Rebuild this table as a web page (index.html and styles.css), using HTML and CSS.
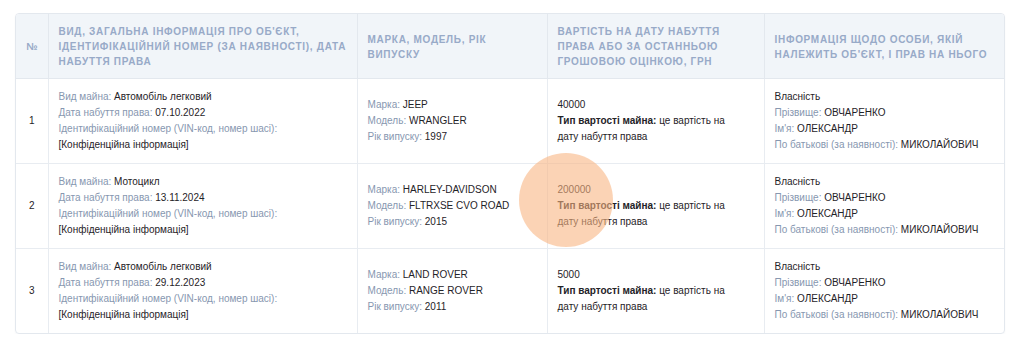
FILE: index.html
```html
<!DOCTYPE html>
<html lang="uk">
<head>
<meta charset="utf-8">
<link rel="stylesheet" href="styles.css">
</head>
<body>
<div class="page">
  <div class="table-wrap">
    <table class="assets">
      <colgroup>
        <col class="c-num"><col class="c-info"><col class="c-brand"><col class="c-cost"><col class="c-owner">
      </colgroup>
      <thead>
        <tr>
          <th class="num">№</th>
          <th>Вид, загальна інформація про об'єкт, ідентифікаційний номер (за наявності), дата набуття права</th>
          <th>Марка, модель, рік випуску</th>
          <th>Вартість на дату набуття права або за останньою грошовою оцінкою, грн</th>
          <th>Інформація щодо особи, якій належить об'єкт, і прав на нього</th>
        </tr>
      </thead>
      <tbody>
        <tr>
          <td class="num">1</td>
          <td>
            <div><span class="lbl">Вид майна:</span> Автомобіль легковий</div>
            <div><span class="lbl">Дата набуття права:</span> 07.10.2022</div>
            <div><span class="lbl">Ідентифікаційний номер (VIN-код, номер шасі):</span></div>
            <div>[Конфіденційна інформація]</div>
          </td>
          <td>
            <div><span class="lbl">Марка:</span> JEEP</div>
            <div><span class="lbl">Модель:</span> WRANGLER</div>
            <div><span class="lbl">Рік випуску:</span> 1997</div>
          </td>
          <td>
            <div>40000</div>
            <div><b>Тип вартості майна:</b> це вартість на дату набуття права</div>
          </td>
          <td>
            <div>Власність</div>
            <div><span class="lbl">Прізвище:</span> ОВЧАРЕНКО</div>
            <div><span class="lbl">Ім'я:</span> ОЛЕКСАНДР</div>
            <div><span class="lbl">По батькові (за наявності):</span> МИКОЛАЙОВИЧ</div>
          </td>
        </tr>
        <tr>
          <td class="num">2</td>
          <td>
            <div><span class="lbl">Вид майна:</span> Мотоцикл</div>
            <div><span class="lbl">Дата набуття права:</span> 13.11.2024</div>
            <div><span class="lbl">Ідентифікаційний номер (VIN-код, номер шасі):</span></div>
            <div>[Конфіденційна інформація]</div>
          </td>
          <td>
            <div><span class="lbl">Марка:</span> HARLEY-DAVIDSON</div>
            <div><span class="lbl">Модель:</span> FLTRXSE CVO ROAD</div>
            <div><span class="lbl">Рік випуску:</span> 2015</div>
          </td>
          <td>
            <div>200000</div>
            <div><b>Тип вартості майна:</b> це вартість на дату набуття права</div>
          </td>
          <td>
            <div>Власність</div>
            <div><span class="lbl">Прізвище:</span> ОВЧАРЕНКО</div>
            <div><span class="lbl">Ім'я:</span> ОЛЕКСАНДР</div>
            <div><span class="lbl">По батькові (за наявності):</span> МИКОЛАЙОВИЧ</div>
          </td>
        </tr>
        <tr>
          <td class="num">3</td>
          <td>
            <div><span class="lbl">Вид майна:</span> Автомобіль легковий</div>
            <div><span class="lbl">Дата набуття права:</span> 29.12.2023</div>
            <div><span class="lbl">Ідентифікаційний номер (VIN-код, номер шасі):</span></div>
            <div>[Конфіденційна інформація]</div>
          </td>
          <td>
            <div><span class="lbl">Марка:</span> LAND ROVER</div>
            <div><span class="lbl">Модель:</span> RANGE ROVER</div>
            <div><span class="lbl">Рік випуску:</span> 2011</div>
          </td>
          <td>
            <div>5000</div>
            <div><b>Тип вартості майна:</b> це вартість на дату набуття права</div>
          </td>
          <td>
            <div>Власність</div>
            <div><span class="lbl">Прізвище:</span> ОВЧАРЕНКО</div>
            <div><span class="lbl">Ім'я:</span> ОЛЕКСАНДР</div>
            <div><span class="lbl">По батькові (за наявності):</span> МИКОЛАЙОВИЧ</div>
          </td>
        </tr>
      </tbody>
    </table>
  </div>
  <div class="click-dot"></div>
</div>
</body>
</html>
```

FILE: styles.css
```css
html, body {
  margin: 0;
  padding: 0;
  background: #ffffff;
}
body {
  font-family: "Liberation Sans", Arial, sans-serif;
  font-size: 10px;
  color: #1f2328;
}
.page {
  position: relative;
  padding: 13px 19px 0 15px;
  width: 990px;
}
.table-wrap {
  width: 988px;
  border: 1px solid #e3e8ee;
  border-radius: 4px;
  overflow: hidden;
  box-shadow: 0 1px 2px rgba(20, 40, 80, 0.04);
}
.assets {
  width: 988px;
  border-collapse: collapse;
  table-layout: fixed;
}
.c-num { width: 32px; }
.c-info { width: 309px; }
.c-brand { width: 190px; }
.c-cost { width: 217px; }
.c-owner { width: 240px; }
.assets th {
  background: #f1f5f9;
  color: #98aac8;
  font-size: 10px;
  font-weight: bold;
  text-transform: uppercase;
  letter-spacing: 0.7px;
  line-height: 15px;
  text-align: left;
  padding: 10px 10px 9px 10px;
  vertical-align: middle;
  border-left: 1px solid #e3e8ee;
  border-bottom: 1px solid #e3e8ee;
}
.assets td {
  padding: 10px 20px 10px 10px;
  line-height: 16px;
  vertical-align: middle;
  border-left: 1px solid #e8ecf1;
  border-top: 1px solid #e8ecf1;
}
.assets th:first-child,
.assets td:first-child {
  border-left: none;
}
.assets .num {
  text-align: center;
  padding-left: 0;
  padding-right: 0;
  letter-spacing: 0;
}
.lbl {
  color: #8797b0;
}
.assets b {
  font-weight: bold;
  color: #1f2328;
}
.click-dot {
  position: absolute;
  left: 519px;
  top: 153px;
  width: 94px;
  height: 94px;
  border-radius: 50%;
  background: rgba(248, 180, 130, 0.59);
  pointer-events: none;
}
```
